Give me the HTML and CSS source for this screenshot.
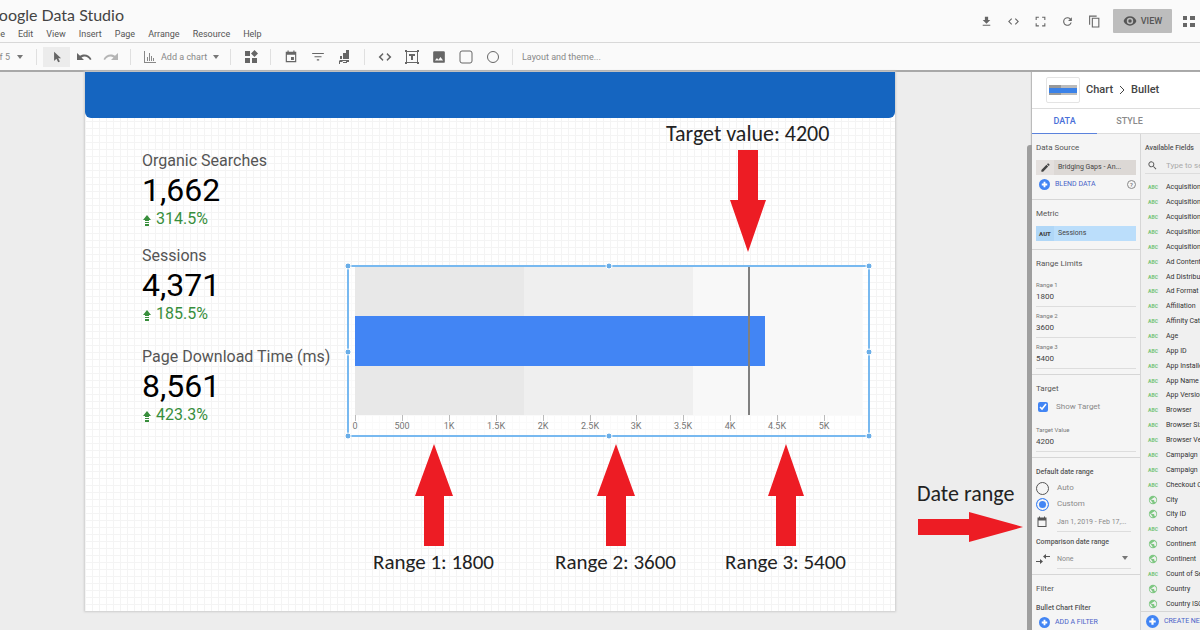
FILE: index.html
```html
<!DOCTYPE html>
<html lang="en">
<head>
	<meta charset="utf-8">
	<title>Google Data Studio</title>
	<link rel="stylesheet" href="styles.css">
</head>
<body>
	<header class="topbar">
		<div class="brand">
			<h1>Google Data Studio</h1>
			<nav class="menu">
				<a class="menu-first" href="#file"><span>File</span></a>
				<a href="#edit">Edit</a>
				<a href="#view">View</a>
				<a href="#insert">Insert</a>
				<a href="#page">Page</a>
				<a href="#arrange">Arrange</a>
				<a href="#resource">Resource</a>
				<a href="#help">Help</a>
			</nav>
		</div>
		<div class="actions">
			<button class="icon-button" aria-label="Download"><svg viewBox="0 0 24 24"><path d="M19 9h-4V3H9v6H5l7 7zM5 18v2h14v-2z"/></svg></button>
			<button class="icon-button" aria-label="Embed"><svg viewBox="0 0 24 24"><path d="M9.4 16.6L4.8 12l4.6-4.6L8 6l-6 6 6 6zm5.2 0l4.6-4.6-4.6-4.6L16 6l6 6-6 6z"/></svg></button>
			<button class="icon-button" aria-label="Full screen"><svg viewBox="0 0 24 24"><path d="M3 3h6v2H5v4H3zM15 3h6v6h-2V5h-4zM3 15h2v4h4v2H3zM19 15h2v6h-6v-2h4z"/></svg></button>
			<button class="icon-button" aria-label="Refresh"><svg viewBox="0 0 24 24"><path d="M17.65 6.35A8 8 0 1 0 19.73 14h-2.08A6 6 0 1 1 12 6c1.66 0 3.14.69 4.22 1.78L13 11h7V4z"/></svg></button>
			<button class="icon-button" aria-label="Copy"><svg viewBox="0 0 24 24"><path d="M16 1H2v17h2V3h12zM21 5H7v18h14zM19 21H9V7h10z"/></svg></button>
			<button class="view-button"><svg viewBox="0 0 24 24"><path d="M12 4C7 4 2.700 7.300 1 12c1.700 4.700 6 8 11 8s9.300-3.300 11-8c-1.700-4.700-6-8-11-8zm0 13.500a5.500 5.500 0 1 1 0-11 5.500 5.500 0 0 1 0 11z"/><circle cx="12" cy="12" r="3"/></svg>VIEW</button>
			<button class="apps-button" aria-label="Apps"><svg viewBox="0 0 12 12"><path d="M0 1h4v4H0zM7 1h5v4H7zM0 8h4v4H0zM7 8h5v4H7z"/></svg></button>
		</div>
	</header>

	<div class="toolbar">
		<button class="pager">Page 1 of 5 <i class="caret"></i></button>
		<i class="divider"></i>
		<button class="icon-button is-active" aria-label="Select"><svg viewBox="0 0 24 24"><path d="M7 3v16l4-4 3 6 3-1.500-3-5.500h5z"/></svg></button>
		<button class="icon-button" aria-label="Undo"><svg class="wide" viewBox="0 0 16 14"><path d="M1 3v7h7L5.500 7.500C8.500 5.500 12 6.500 14 10l1.500-.8C13.500 4.500 8 3 4 5.800z"/></svg></button>
		<button class="icon-button is-disabled" aria-label="Redo"><svg class="wide" viewBox="0 0 16 14"><path d="M15 3v7H8l2.500-2.500C7.500 5.500 4 6.500 2 10L.5 9.200C2.500 4.500 8 3 12 5.800z"/></svg></button>
		<i class="divider"></i>
		<button class="add-chart"><svg viewBox="0 0 14 14"><path d="M1 1h1v11h11v1H1zM4 7h1v4H4zM6 3h1v8H6zM8 6h1v5H8zM10 8h1v3h-1z"/></svg>Add a chart <i class="caret"></i></button>
		<i class="divider"></i>
		<button class="icon-button" aria-label="Community visualizations"><svg viewBox="0 0 14 14"><path d="M1 1h5v5H1zM1 8h5v5H1zM8 8h5v5H8zM10.500 0L14 3.500 10.500 7 7 3.500z"/></svg></button>
		<i class="divider"></i>
		<button class="icon-button" aria-label="Date range"><svg viewBox="0 0 24 24"><path d="M17 12h-5v5h5zM16 1v2H8V1H6v2H3v18h18V3h-3V1zm3 18H5V8h14z"/></svg></button>
		<button class="icon-button" aria-label="Filter control"><svg viewBox="0 0 24 24"><path d="M10 18h4v-2h-4zM2 5v2h20V5zm4 7.500h12v-2H6z"/></svg></button>
		<button class="icon-button" aria-label="Data control"><svg viewBox="0 0 14 14"><path d="M2 6h2v3H2zM5 3h3v6H5zM8 0h3v9H8zM2 10h6v1H4l1 1H2v2H1v-3zM8 10h3v2H9v1H5v-1h3z"/></svg></button>
		<i class="divider"></i>
		<button class="icon-button" aria-label="URL embed"><svg viewBox="0 0 24 24"><path d="M9.400 16.600L4.800 12l4.600-4.600L8 5l-7 7 7 7zm5.200 0l4.600-4.600-4.600-4.600L16 5l7 7-7 7z"/></svg></button>
		<button class="icon-button" aria-label="Text"><svg viewBox="0 0 14 14"><path fill="none" stroke="currentColor" d="M1.500 1.500h11v11h-11z"/><path d="M0 0h2v2H0zM12 0h2v2h-2zM0 12h2v2H0zM12 12h2v2h-2zM4 4h6v2H8v4H6V6H4z"/></svg></button>
		<button class="icon-button" aria-label="Image"><svg viewBox="0 0 24 24"><path d="M22 20V4a2 2 0 0 0-2-2H4a2 2 0 0 0-2 2v16c0 1.100.9 2 2 2h16a2 2 0 0 0 2-2zM8.500 13.500l2.500 3 3.500-4.500 4.500 6H5z"/></svg></button>
		<button class="icon-button is-outline" aria-label="Rectangle"><svg viewBox="0 0 14 14"><rect x="1" y="1" width="12" height="12" rx="2"/></svg></button>
		<button class="icon-button is-outline" aria-label="Circle"><svg viewBox="0 0 14 14"><circle cx="7" cy="7" r="5.500"/></svg></button>
		<i class="divider"></i>
		<button class="theme-button">Layout and theme...</button>
	</div>

	<div class="editor">
		<main class="workspace">
			<div class="report">
				<div class="report-banner"></div>

				<section class="scorecard searches">
					<h2>Organic Searches</h2>
					<strong>1,662</strong>
					<p><svg viewBox="0 0 8 11"><path d="M4 0l4 5H6v1H2V5H0zM2 7h4v1H2zM2 9h4v2H2z"/></svg>314.5%</p>
				</section>
				<section class="scorecard sessions">
					<h2>Sessions</h2>
					<strong>4,371</strong>
					<p><svg viewBox="0 0 8 11"><path d="M4 0l4 5H6v1H2V5H0zM2 7h4v1H2zM2 9h4v2H2z"/></svg>185.5%</p>
				</section>
				<section class="scorecard download">
					<h2>Page Download Time (ms)</h2>
					<strong>8,561</strong>
					<p><svg viewBox="0 0 8 11"><path d="M4 0l4 5H6v1H2V5H0zM2 7h4v1H2zM2 9h4v2H2z"/></svg>423.3%</p>
				</section>

				<svg class="bullet" viewBox="0 0 530 180">
					<rect class="bullet-bg" x="5" y="5" width="521" height="170"/>
					<!-- ranges: 1800, 3600, 5400 -->
					<rect class="range-1" x="12" y="5" width="169" height="149"/>
					<rect class="range-2" x="181" y="5" width="169" height="149"/>
					<rect class="range-3" x="350" y="5" width="169" height="149"/>
					<rect class="bar" x="12" y="55" width="410" height="50"/>
					<rect class="target" x="405" y="5" width="2" height="149"/>
					<path class="ticks" d="M12.500 154v6M59.500 154v6M106.500 154v6M153.500 154v6M200.500 154v6M247.500 154v6M293.500 154v6M340.500 154v6M387.500 154v6M434.500 154v6M481.500 154v6"/>
					<g class="axis">
						<text x="12" y="168">0</text>
						<text x="59" y="168">500</text>
						<text x="106" y="168">1K</text>
						<text x="153" y="168">1.5K</text>
						<text x="200" y="168">2K</text>
						<text x="247" y="168">2.5K</text>
						<text x="293" y="168">3K</text>
						<text x="340" y="168">3.5K</text>
						<text x="387" y="168">4K</text>
						<text x="434" y="168">4.5K</text>
						<text x="481" y="168">5K</text>
					</g>
					<rect class="selection" x="5" y="5" width="521" height="170"/>
					<g class="handles">
						<circle cx="5" cy="5" r="3"/><circle cx="266" cy="5" r="3"/><circle cx="526" cy="5" r="3"/>
						<circle cx="5" cy="91" r="3"/><circle cx="526" cy="91" r="3"/>
						<circle cx="5" cy="175" r="3"/><circle cx="266" cy="175" r="3"/><circle cx="526" cy="175" r="3"/>
					</g>
				</svg>

				<div class="note note-target">
					Target value: 4200
					<svg class="arrow" viewBox="0 0 38 104"><path d="M9 1h20v50h8L19 103 1 51h8z"/></svg>
				</div>
				<div class="note note-range range-first">
					<svg class="arrow" viewBox="0 0 38 104"><path d="M9 103h20V53h9L19 1 0 53h9z"/></svg>
					Range 1: 1800
				</div>
				<div class="note note-range range-second">
					<svg class="arrow" viewBox="0 0 38 104"><path d="M9 103h20V53h9L19 1 0 53h9z"/></svg>
					Range 2: 3600
				</div>
				<div class="note note-range range-third">
					<svg class="arrow" viewBox="0 0 38 104"><path d="M9 103h20V53h8L19 1 1 53h8z"/></svg>
					Range 3: 5400
				</div>
			</div>
			<div class="note note-date">
				Date range
				<svg class="arrow-side" viewBox="0 0 108 32"><path d="M1 8h51V1l54 15-54 15v-7H1z"/></svg>
			</div>
		</main>

		<aside class="panel">
			<div class="panel-head">
				<span class="thumb"><svg viewBox="0 0 28 12"><path fill="#999" d="M0 1h28v10H0z"/><path fill="#bbb" d="M12 1h16v10H12z"/><path fill="#3b82e8" d="M0 4h28v5H0z"/></svg></span>
				<span>Chart</span>
				<svg class="chevron" viewBox="0 0 6 10"><path d="M1 1l4 4-4 4"/></svg>
				<span>Bullet</span>
			</div>
			<div class="tabs">
				<button class="is-selected">DATA</button>
				<button>STYLE</button>
			</div>
			<div class="columns">
				<div class="settings">
					<section>
						<h3>Data Source</h3>
						<button class="chip source"><b><svg viewBox="0 0 24 24"><path d="M3 17.200V21h3.800L17.800 9.900l-3.700-3.700zM20.700 7a1 1 0 0 0 0-1.400l-2.300-2.300a1 1 0 0 0-1.400 0l-1.800 1.800 3.700 3.700z"/></svg></b><span>Bridging Gaps - An...</span></button>
						<div class="blend">
							<button class="add"><svg viewBox="0 0 12 12"><circle cx="6" cy="6" r="6"/><path d="M5 3h2v2h2v2H7v2H5V7H3V5h2z"/></svg>BLEND DATA</button>
							<button class="help" aria-label="Help">?</button>
						</div>
					</section>
					<section>
						<h3>Metric</h3>
						<button class="chip metric"><b>AUT</b><span>Sessions</span></button>
					</section>
					<section class="fields">
						<h3>Range Limits</h3>
						<label class="field">Range 1<input value="1800"></label>
						<label class="field">Range 2<input value="3600"></label>
						<label class="field">Range 3<input value="5400"></label>
					</section>
					<section class="fields">
						<h3>Target</h3>
						<label class="check"><input type="checkbox" checked>Show Target</label>
						<label class="field">Target Value<input value="4200"></label>
					</section>
					<section class="dates">
						<h3>Default date range</h3>
						<label class="radio"><input type="radio" name="range">Auto</label>
						<label class="radio"><input type="radio" name="range" checked>Custom</label>
						<div class="picker">
							<svg viewBox="0 0 24 24"><path d="M20 3h-2V1h-2v2H8V1H6v2H3v19h18V3zm-1 17H5V9h14z"/></svg>
							<button>Jan 1, 2019 - Feb 17,...</button>
						</div>
						<h4 id="comparison">Comparison date range</h4>
						<div class="picker">
							<svg class="compare" viewBox="0 0 14 10"><path d="M14 2v1h-4v2L7 2.500 10 0v2zM0 7h4V5l3 2.500L4 10V8H0z"/></svg>
							<select aria-labelledby="comparison"><option>None</option></select>
							<i class="caret"></i>
						</div>
					</section>
					<section>
						<h3>Filter</h3>
						<h4>Bullet Chart Filter</h4>
						<button class="add"><svg viewBox="0 0 12 12"><circle cx="6" cy="6" r="6"/><path d="M5 3h2v2h2v2H7v2H5V7H3V5h2z"/></svg>ADD A FILTER</button>
					</section>
				</div>
				<div class="available">
					<h3>Available Fields</h3>
					<label class="search">
						<svg viewBox="0 0 24 24"><path d="M15.500 14h-.8l-.3-.3a6.500 6.500 0 1 0-.7.7l.3.3v.8l5 5 1.500-1.500zm-6 0a4.500 4.500 0 1 1 0-9 4.500 4.500 0 0 1 0 9z"/></svg>
						<input type="text" placeholder="Type to search" aria-label="Search fields">
					</label>
					<ul class="field-list">
						<li><b>ABC</b>Acquisition</li>
						<li><b>ABC</b>Acquisition</li>
						<li><b>ABC</b>Acquisition</li>
						<li><b>ABC</b>Acquisition</li>
						<li><b>ABC</b>Acquisition</li>
						<li><b>ABC</b>Ad Content</li>
						<li><b>ABC</b>Ad Distribution</li>
						<li><b>ABC</b>Ad Format</li>
						<li><b>ABC</b>Affiliation</li>
						<li><b>ABC</b>Affinity Category</li>
						<li><b>ABC</b>Age</li>
						<li><b>ABC</b>App ID</li>
						<li><b>ABC</b>App Installer</li>
						<li><b>ABC</b>App Name</li>
						<li><b>ABC</b>App Version</li>
						<li><b>ABC</b>Browser</li>
						<li><b>ABC</b>Browser Size</li>
						<li><b>ABC</b>Browser Version</li>
						<li><b>ABC</b>Campaign</li>
						<li><b>ABC</b>Campaign</li>
						<li><b>ABC</b>Checkout Options</li>
						<li><svg viewBox="0 0 24 24"><use href="#globe"/></svg>City</li>
						<li><svg viewBox="0 0 24 24"><use href="#globe"/></svg>City ID</li>
						<li><b>ABC</b>Cohort</li>
						<li><svg viewBox="0 0 24 24"><use href="#globe"/></svg>Continent</li>
						<li><svg viewBox="0 0 24 24"><use href="#globe"/></svg>Continent</li>
						<li><b>ABC</b>Count of Sessions</li>
						<li><svg viewBox="0 0 24 24"><use href="#globe"/></svg>Country</li>
						<li><svg viewBox="0 0 24 24"><use href="#globe"/></svg>Country ISO</li>
					</ul>
					<button class="add create"><svg viewBox="0 0 12 12"><circle cx="6" cy="6" r="6"/><path d="M5 3h2v2h2v2H7v2H5V7H3V5h2z"/></svg>CREATE NEW</button>
				</div>
			</div>
		</aside>
	</div>

	<svg class="symbols" aria-hidden="true">
		<symbol id="globe" viewBox="0 0 24 24"><path d="M12 2a10 10 0 1 0 0 20 10 10 0 0 0 0-20zm-1 17.900A8 8 0 0 1 4.200 10.200L9 15v1c0 1.100.9 2 2 2zm6.900-2.500A2 2 0 0 0 16 16h-1v-3a1 1 0 0 0-1-1H8v-2h2a1 1 0 0 0 1-1V7h2a2 2 0 0 0 2-2v-.4a8 8 0 0 1 2.900 12.800z"/></symbol>
	</svg>
</body>
</html>
```

FILE: styles.css
```css
* {
	box-sizing: border-box;
}

body {
	margin: 0;
	height: 100vh;
	display: flex;
	flex-direction: column;
	overflow: hidden;
	font: 9px/14px Roboto, "Liberation Sans", sans-serif;
	color: #555;
	background: #ededed;
}

h1, h2, h3, h4, p, ul {
	margin: 0;
	padding: 0;
	font-weight: 400;
}

button, input, select {
	margin: 0;
	padding: 0;
	border: 0;
	background: none;
	font: inherit;
	color: inherit;
}

a {
	color: inherit;
	text-decoration: none;
}

svg {
	fill: currentColor;
	flex: none;
}

.symbols {
	display: none;
}

.caret {
	border: 3px solid transparent;
	border-top: 4px solid #777;
	border-bottom: 0;
}

/* Top bar */

.topbar {
	display: flex;
	justify-content: space-between;
	height: 43px;
	background: #fafafa;
	border-bottom: 1px solid #d8d8d8;
}

.brand h1 {
	display: flex;
	justify-content: flex-end;
	width: 124px;
	margin-top: 5px;
	font: 16px/20px Lato, sans-serif;
	color: #444;
	white-space: nowrap;
}

.menu {
	display: flex;
	gap: 13px;
	margin-top: 2px;
}

.menu-first {
	display: flex;
	justify-content: flex-end;
	width: 5px;
}

.actions {
	display: flex;
	align-items: center;
	padding-right: 5px;
}

.icon-button {
	display: flex;
	align-items: center;
	justify-content: center;
	width: 27px;
	height: 20px;
	color: #666;
}

.icon-button svg {
	width: 14px;
	height: 14px;
}

.actions .icon-button svg {
	width: 13px;
	height: 13px;
}

.icon-button .wide {
	width: 16px;
}

.view-button {
	display: flex;
	align-items: center;
	justify-content: center;
	gap: 4px;
	width: 59px;
	height: 24px;
	margin: 0 11px 0 5px;
	background: #bdbdbd;
	font-weight: 500;
	border-radius: 1px;
}

.view-button svg {
	width: 14px;
	height: 14px;
}

.apps-button {
	display: flex;
	color: #666;
}

.apps-button svg {
	width: 12px;
	height: 12px;
}

/* Toolbar */

.toolbar {
	display: flex;
	align-items: center;
	height: 29px;
	background: #fafafa;
	border-bottom: 2px solid #a8a8a8;
	color: #888;
}

.pager {
	display: flex;
	align-items: center;
	justify-content: flex-end;
	gap: 7px;
	width: 36px;
	padding-right: 13px;
	white-space: nowrap;
}

.divider {
	width: 1px;
	height: 16px;
	margin: 0 6px;
	background: #e0e0e0;
}

.pager + .divider {
	margin-left: 0;
}

.is-active {
	background: #ececec;
}

.is-disabled {
	color: #b5b5b5;
}

.is-outline svg {
	fill: none;
	stroke: currentColor;
}

.add-chart {
	display: flex;
	align-items: center;
	gap: 4px;
	width: 87px;
	padding-left: 6px;
	white-space: nowrap;
}

.add-chart svg {
	width: 14px;
	height: 14px;
}

.add-chart .caret {
	margin-left: 2px;
}

.theme-button {
	padding: 0 3px;
}

/* Report canvas */

.editor {
	flex: 1;
	display: flex;
	min-height: 0;
}

.workspace {
	position: relative;
	flex: 1;
	min-width: 0;
	padding: 0 137px 19px 85px;
}

.report {
	position: relative;
	height: 100%;
	background-color: #fff;
	background-image:
		linear-gradient(to right, #f4f4f4 1px, transparent 1px),
		linear-gradient(to bottom, #f4f4f4 1px, transparent 1px);
	background-size: 7px 7px;
	box-shadow: 0 0 2px 1px #ccc;
}

.report-banner {
	height: 46px;
	background: #1565c0;
	border-radius: 0 0 6px 6px;
}

.scorecard {
	position: absolute;
	left: 57px;
	font-size: 16px;
	line-height: 20px;
}

.scorecard h2 {
	font-size: 16px;
}

.scorecard strong {
	display: block;
	font-size: 32px;
	line-height: 38px;
	font-weight: 400;
	color: #000;
}

.scorecard p {
	display: flex;
	align-items: center;
	gap: 5px;
	color: #388e3c;
}

.scorecard svg {
	width: 8px;
	height: 11px;
	margin: 2px 0 0 1px;
}

.searches {
	top: 79px;
}

.sessions {
	top: 174px;
}

.download {
	top: 275px;
}

.bullet {
	position: absolute;
	top: 189px;
	left: 258px;
	width: 530px;
	height: 180px;
}

.bullet-bg {
	fill: #fff;
	fill-opacity: .5;
}

.range-1 {
	fill: #e8e8e8;
}

.range-2 {
	fill: #efefef;
}

.range-3 {
	fill: #f8f8f8;
}

.bar {
	fill: #4285f4;
}

.target {
	fill: #808080;
}

.ticks {
	stroke: #bbb;
}

.axis {
	font-size: 9px;
	text-anchor: middle;
	fill: #757575;
}

.selection {
	fill: none;
	stroke: #78b9f0;
	stroke-width: 2;
}

.handles {
	fill: #6aaee8;
	stroke: #fff;
}

.note {
	position: absolute;
	display: flex;
	flex-direction: column;
	align-items: center;
	font: 22px/24px Carlito, Lato, sans-serif;
	color: #222;
	white-space: nowrap;
}

.arrow {
	width: 38px;
	height: 104px;
	fill: #ed1c24;
}

.arrow-side {
	width: 108px;
	height: 32px;
	fill: #ed1c24;
}

.note-target {
	top: 50px;
	left: 581px;
	gap: 3px;
}

.note-range {
	top: 371px;
	gap: 3px;
	font-size: 21px;
}

.range-first {
	left: 288px;
}

.range-second {
	left: 470px;
}

.range-third {
	left: 640px;
}

.note-date {
	top: 410px;
	right: 7px;
	gap: 5px;
	align-items: flex-start;
}

/* Property panel */

.panel {
	position: relative;
	display: flex;
	flex-direction: column;
	width: 168px;
	background: #fff;
	box-shadow: -1px 0 1px #bbb;
}

/* scroll thumb */
.panel::before {
	content: "";
	position: absolute;
	top: 73px;
	bottom: 0;
	left: -5px;
	width: 5px;
	background: #9e9e9e;
	border-radius: 3px 0 0 0;
}

.panel-head {
	display: flex;
	align-items: center;
	height: 37px;
	gap: 6px;
	padding-left: 14px;
	border-bottom: 1px solid #ddd;
	font-size: 11px;
	font-weight: 500;
	color: #444;
}

.thumb {
	display: flex;
	align-items: center;
	justify-content: center;
	width: 34px;
	height: 26px;
	border: 1px solid #e4e4e4;
	border-radius: 2px;
}

.thumb svg {
	width: 28px;
	height: 12px;
}

.chevron {
	width: 6px;
	height: 10px;
	fill: none;
	stroke: currentColor;
}

.tabs {
	display: flex;
	height: 25px;
	border-bottom: 1px solid #ddd;
}

.tabs button {
	width: 65px;
	font-weight: 500;
	color: #8a8a8a;
}

.tabs .is-selected {
	color: #4a6fd8;
	box-shadow: 0 2px #5b82dc;
}

.columns {
	flex: 1;
	display: flex;
	min-height: 0;
	font-size: 8px;
}

.settings {
	width: 108px;
	background: #f5f5f5;
	overflow: hidden;
}

.settings section {
	padding: 7px 4px 8px;
	border-bottom: 1px solid #d6d6d6;
}

.settings .fields {
	padding-bottom: 5px;
}

.settings h3 {
	margin-bottom: 5px;
	font-size: 8px;
}

.settings h4 {
	font-size: 7px;
	font-weight: 500;
}

.chip {
	display: flex;
	width: 100%;
	height: 15px;
	line-height: 15px;
	font-size: 7px;
	text-align: left;
	color: #444;
}

.chip b {
	display: flex;
	align-items: center;
	justify-content: center;
	width: 18px;
	font-size: 6px;
	font-weight: 900;
}

.chip svg {
	width: 11px;
	height: 11px;
}

.chip span {
	flex: 1;
	padding-left: 4px;
}

.source {
	background: #dcd8d5;
}

.source b {
	background: #e4e0de;
}

.metric {
	background: #bbdefb;
}

.metric b {
	background: #b0d7f7;
}

.blend {
	display: flex;
	align-items: center;
	justify-content: space-between;
	margin-top: 2px;
}

.add {
	display: flex;
	align-items: center;
	gap: 5px;
	height: 14px;
	padding-left: 3px;
	font-size: 7px;
	color: #4a62c8;
	white-space: nowrap;
}

.add svg {
	width: 11px;
	height: 11px;
	fill: #4285f4;
}

.add path {
	fill: #fff;
}

.help {
	width: 9px;
	height: 9px;
	border: 1px solid #888;
	border-radius: 50%;
	font-size: 6px;
	line-height: 7px;
}

.field {
	display: block;
	height: 31px;
	padding-top: 4px;
	font-size: 6px;
	line-height: 10px;
	border-bottom: 1px solid #ddd;
	color: #777;
}

.field input {
	display: block;
	width: 100%;
	height: 12px;
	font-size: 8px;
	color: #444;
}

.check, .radio {
	display: flex;
	align-items: center;
	gap: 8px;
	color: #8a8a8a;
}

.check {
	height: 12px;
	margin-bottom: 8px;
	padding-left: 2px;
}

.check input {
	width: 10px;
	height: 10px;
	accent-color: #4285f4;
}

.radio {
	height: 16px;
}

.radio input {
	appearance: none;
	width: 13px;
	height: 13px;
	border: 1px solid #555;
	border-radius: 50%;
}

.radio input:checked {
	border-color: #4285f4;
	background: #4285f4;
	box-shadow: inset 0 0 0 2px #f5f5f5;
}

.settings .dates {
	padding-bottom: 5px;
}

.settings .dates h3 {
	margin-bottom: 1px;
	font-size: 7px;
	font-weight: 500;
}

.picker {
	position: relative;
	display: flex;
	align-items: center;
	height: 20px;
	margin-right: 5px;
	color: #8a8a8a;
}

.picker > svg {
	width: 12px;
	height: 12px;
	margin-right: 9px;
	color: #555;
}

.picker > .compare {
	width: 14px;
	margin-right: 7px;
}

.picker button, .picker select {
	flex: 1;
	min-width: 0;
	height: 20px;
	font-size: 7px;
	border-bottom: 1px solid #ddd;
	text-align: left;
	white-space: nowrap;
}

.picker select {
	appearance: none;
}

.picker .caret {
	position: absolute;
	right: 3px;
	top: 7px;
}

.dates h4 {
	margin-top: 3px;
}

.available {
	flex: 1;
	min-width: 0;
	display: flex;
	flex-direction: column;
	overflow: hidden;
	background: #f0f0f0;
	border-left: 1px solid #d6d6d6;
	white-space: nowrap;
}

.available h3 {
	margin: 7px 0 0 4px;
	font-size: 7px;
	font-weight: 500;
}

.search {
	display: flex;
	align-items: center;
	gap: 8px;
	height: 19px;
	margin: 0 0 6px 4px;
	padding: 3px 0 0 2px;
	border-bottom: 1px solid #ddd;
}

.search svg {
	width: 11px;
	height: 11px;
}

.search input {
	min-width: 0;
	width: 100%;
}

.search input::placeholder {
	color: #aaa;
}

.field-list {
	flex: 1;
	min-height: 0;
	display: grid;
	grid-auto-rows: minmax(0, 1fr);
	list-style: none;
	color: #333;
	font-size: 7px;
}

.field-list li {
	display: flex;
	align-items: center;
	padding-left: 7px;
}

.field-list b {
	width: 18px;
	font-size: 5px;
	font-weight: 900;
	color: #7fc783;
}

.field-list svg {
	width: 10px;
	height: 10px;
	margin-right: 8px;
	fill: #7fc783;
}

.create {
	height: 19px;
	padding-left: 5px;
	border-top: 1px solid #d6d6d6;
}

.create svg {
	width: 13px;
	height: 13px;
}
```
